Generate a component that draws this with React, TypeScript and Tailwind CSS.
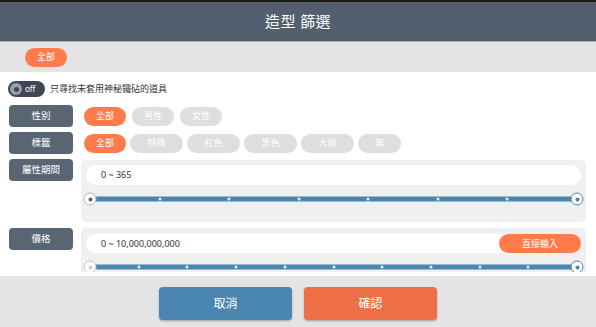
const FONT = { fontFamily: '"Noto Sans", "Noto Sans CJK TC", sans-serif' };

const GENDERS = ["全部", "男性", "女性"];
const TAGS = [
  { label: "全部", w: "w-[42px]" },
  { label: "特殊", w: "w-[53px]" },
  { label: "紅色", w: "w-[53px]" },
  { label: "黑色", w: "w-[53px]" },
  { label: "大師", w: "w-[53px]" },
  { label: "無", w: "w-[43px]" },
];

function Pill({ label, active, className = "w-[42px]" }: { label: string; active?: boolean; className?: string }) {
  return (
    <div
      className={`${className} h-[19px] rounded-full flex items-center justify-center text-[9px] text-white ${
        active ? "bg-[#ff7b4c]" : "bg-[#dedede]"
      }`}
    >
      {label}
    </div>
  );
}

function Label({ text }: { text: string }) {
  return (
    <div className="w-[64px] h-[22px] rounded-[4px] bg-[#5a6574] text-white text-[9.5px] flex items-center justify-center shrink-0">
      {text}
    </div>
  );
}

function Handle({ side, muted }: { side: "left" | "right"; muted?: boolean }) {
  return (
    <div
      className={`absolute top-1/2 -translate-y-1/2 w-[13px] h-[13px] rounded-full bg-white border-[1.5px] flex items-center justify-center ${
        side === "left" ? "left-0 -translate-x-1/2" : "right-0 translate-x-1/2"
      } ${muted ? "border-[#c9c9c9]" : side === "left" ? "border-[#b5b5b5]" : "border-[#4a85ae]"}`}
    >
      <div className={`w-[4px] h-[4px] rounded-full ${muted ? "bg-[#cfcfcf]" : side === "left" ? "bg-[#5a6574]" : "bg-[#4a85ae]"}`} />
    </div>
  );
}

function Slider({ steps, mutedLeft }: { steps: number; mutedLeft?: boolean }) {
  const ticks = Array.from({ length: steps - 1 }, (_, i) => ((i + 1) / steps) * 100);
  return (
    <div className="relative ml-[9px] w-[487px] h-[14px]">
      <div className="absolute inset-x-0 top-1/2 -translate-y-1/2 h-[5px] bg-[#4a86b0]" />
      {ticks.map((t) => (
        <div
          key={t}
          className="absolute top-1/2 -translate-y-1/2 -translate-x-1/2 w-[3px] h-[3px] rounded-full bg-[#e6eef5]"
          style={{ left: `${t}%` }}
        />
      ))}
      <Handle side="left" muted={mutedLeft} />
      <Handle side="right" />
    </div>
  );
}

export default function App() {
  return (
    <div className="w-[596px] h-[327px] flex flex-col bg-white overflow-hidden" style={FONT}>
      <div className="h-[2px] bg-[#1c1c1c] shrink-0" />
      <div className="h-[40px] bg-[#535f6f] border-b border-[#a7acb3] flex items-center justify-center text-white text-[15px] tracking-wide shrink-0">
        造型 篩選
      </div>
      <div className="h-[30px] bg-[#e4e4e4] flex items-center pl-[25px] shrink-0">
        <Pill label="全部" active />
      </div>

      <div className="h-[204px] pb-[4px] shrink-0">
        <div className="h-full overflow-hidden">
          <div className="flex items-center gap-[5px] pl-[8px] mt-[9px]">
            <div className="w-[37px] h-[16px] rounded-full bg-[#3e4753] flex items-center pl-[2px] gap-[3px]">
              <div className="w-[12px] h-[12px] rounded-full bg-[#9aa1aa] flex items-center justify-center">
                <div className="w-[5px] h-[5px] rounded-full bg-[#3e4753]" />
              </div>
              <span className="text-[8px] text-white leading-none">off</span>
            </div>
            <span className="text-[9px] text-[#333]">只尋找未套用神秘鐵砧的道具</span>
          </div>

          <div className="flex flex-col gap-[5px] pl-[9px] mt-[8px]">
            <div className="flex gap-[8px] items-center">
              <Label text="性別" />
              <div className="flex gap-[6px] pl-[3px]">
                {GENDERS.map((g, i) => (
                  <Pill key={g} label={g} active={i === 0} />
                ))}
              </div>
            </div>
            <div className="flex gap-[8px] items-center">
              <Label text="標籤" />
              <div className="flex gap-[4px] pl-[3px]">
                {TAGS.map((t, i) => (
                  <Pill key={t.label} label={t.label} active={i === 0} className={t.w} />
                ))}
              </div>
            </div>
            <div className="flex gap-[8px] items-start">
              <Label text="屬性期間" />
              <div className="w-[505px] mt-[1px] bg-[#f0f0f0] rounded-[5px] pt-[5px] pb-[16px] px-[5px]">
                <div className="h-[20px] bg-white rounded-full flex items-center pl-[15px] text-[9px] text-[#333]">
                  0 ~ 365
                </div>
                <div className="mt-[7px] -ml-[5px]">
                  <Slider steps={7} />
                </div>
              </div>
            </div>
            <div className="flex gap-[8px] items-start mt-[1px]">
              <Label text="價格" />
              <div className="w-[505px] bg-[#f0f0f0] rounded-[5px] pt-[6px] pb-[16px] px-[5px]">
                <div className="h-[19px] bg-white rounded-full flex items-center justify-between pl-[15px] text-[9px] text-[#333]">
                  <span>0 ~ 10,000,000,000</span>
                  <div className="w-[82px] h-[19px] rounded-full bg-[#ff7b4c] text-white flex items-center justify-center">
                    直接輸入
                  </div>
                </div>
                <div className="mt-[7px] -ml-[5px]">
                  <Slider steps={10} mutedLeft />
                </div>
              </div>
            </div>
          </div>
        </div>
      </div>

      <div className="flex-1 bg-[#e4e4e4] flex justify-center gap-[12px] pt-[11px]">
        <button className="w-[133px] h-[33px] rounded-[4px] bg-[#4a86b0] text-white text-[12px] shadow-[0_1px_2px_rgba(0,0,0,0.3)]">
          取消
        </button>
        <button className="w-[133px] h-[33px] rounded-[4px] bg-[#ee6f45] text-white text-[12px] shadow-[0_1px_2px_rgba(0,0,0,0.3)]">
          確認
        </button>
      </div>
    </div>
  );
}
